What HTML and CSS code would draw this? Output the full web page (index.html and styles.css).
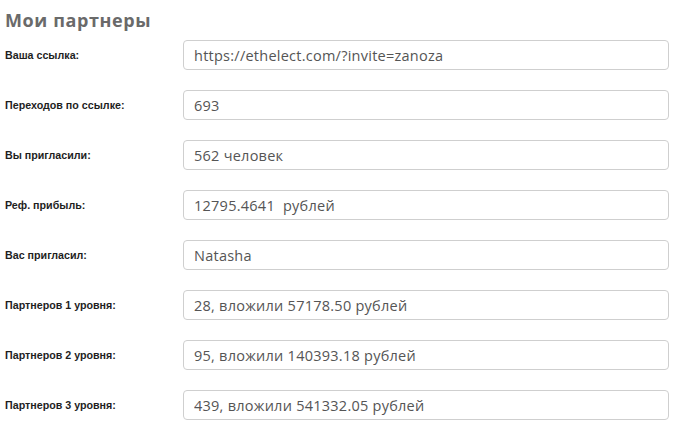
FILE: index.html
```html
<!DOCTYPE html>
<html lang="ru">
<head>
    <meta charset="UTF-8">
    <title>Мои партнеры</title>
    <link rel="stylesheet" href="styles.css">
</head>
<body>

    <section class="partners">
        <h2 class="partners-title">Мои партнеры</h2>

        <div class="form-row">
            <label for="ref-link">Ваша ссылка:</label>
            <input type="text" id="ref-link" value="https://ethelect.com/?invite=zanoza" readonly>
        </div>

        <div class="form-row">
            <label for="ref-clicks">Переходов по ссылке:</label>
            <input type="text" id="ref-clicks" value="693" readonly>
        </div>

        <div class="form-row">
            <label for="ref-invited">Вы пригласили:</label>
            <input type="text" id="ref-invited" value="562 человек" readonly>
        </div>

        <div class="form-row">
            <label for="ref-profit">Реф. прибыль:</label>
            <input type="text" id="ref-profit" value="12795.4641  рублей" readonly>
        </div>

        <div class="form-row">
            <label for="ref-inviter">Вас пригласил:</label>
            <input type="text" id="ref-inviter" value="Natasha" readonly>
        </div>

        <div class="form-row">
            <label for="level-1">Партнеров 1 уровня:</label>
            <input type="text" id="level-1" value="28, вложили 57178.50 рублей" readonly>
        </div>

        <div class="form-row">
            <label for="level-2">Партнеров 2 уровня:</label>
            <input type="text" id="level-2" value="95, вложили 140393.18 рублей" readonly>
        </div>

        <div class="form-row">
            <label for="level-3">Партнеров 3 уровня:</label>
            <input type="text" id="level-3" value="439, вложили 541332.05 рублей" readonly>
        </div>
    </section>

</body>
</html>
```

FILE: styles.css
```css
/* Basic Styles */
body {
    margin: 0;
    font-family: "Liberation Sans", Arial, sans-serif;
    background-color: #fff;
}

.partners {
    padding: 8px 11px 0 5px;
}

.partners-title {
    margin: 0 0 8px;
    font-family: "Open Sans", sans-serif;
    font-size: 18px;
    line-height: 24px;
    font-weight: bold;
    letter-spacing: 0.6px;
    color: #6a6a6a;
}

.form-row {
    display: flex;
    align-items: center;
    margin-bottom: 20px;
}

.form-row label {
    width: 178px;
    flex-shrink: 0;
    font-size: 10.7px;
    font-weight: bold;
    color: #1e1e1e;
}

.form-row input {
    flex: 1;
    height: 30px;
    box-sizing: border-box;
    padding: 0 10px;
    font-family: "Open Sans", sans-serif;
    font-size: 14.5px;
    letter-spacing: 0.25px;
    color: #555;
    border: 1px solid #cfcfcf;
    border-radius: 4px;
    background-color: #fff;
    outline: none;
}
```
